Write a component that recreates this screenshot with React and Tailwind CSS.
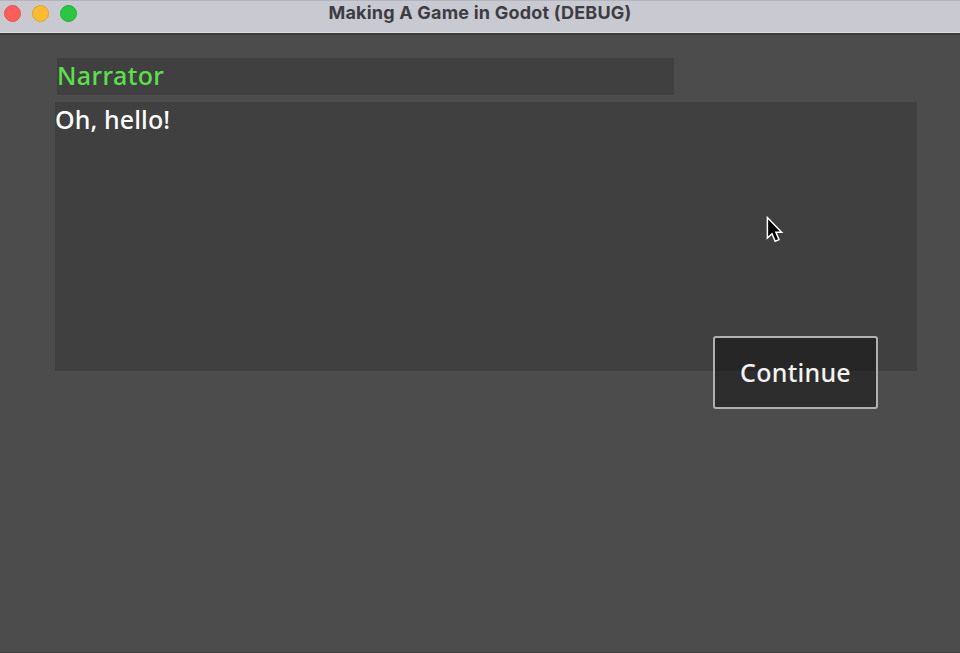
function TitleBar() {
  return (
    <header className="relative flex h-[35px] shrink-0 border-t border-b-2 border-t-[#b4b4be] border-b-[#3d3d3a] bg-[#c9c9d2] shadow-[inset_0_-1px_0_#dcdce2]">
      <div className="flex gap-[11px] pt-[4px] pl-[4px]">
        <span className="size-[17px] rounded-full border border-[#e2564f] bg-[#ff5d57]" />
        <span className="size-[17px] rounded-full border border-[#dfa431] bg-[#febb2e]" />
        <span className="size-[17px] rounded-full border border-[#27ae38] bg-[#28c840]" />
      </div>
      <h1 className="absolute inset-x-0 top-0 text-center font-['Inter',sans-serif] text-[18px] leading-[24px] font-bold whitespace-nowrap text-[#3d3d42]">
        <span className="inline-block tracking-[0.2px]">Making A Game in Godot (DEBUG)</span>
      </h1>
    </header>
  );
}

function Cursor() {
  return (
    <svg className="absolute top-[215px] left-[765px] h-[29px] w-[20px]" viewBox="0 0 20 29">
      <path
        d="M2.4 2.5V23L7 18.7L10.2 26.2L14 24.6L10.9 17.2H16.6Z"
        fill="#000"
        stroke="#fff"
        strokeWidth="1.5"
      />
    </svg>
  );
}

export default function App() {
  return (
    <div className="relative flex h-[653px] w-[960px] flex-col overflow-hidden border-b border-[#3c3c3c] bg-[#4c4c4c] font-['Noto_Sans',sans-serif] text-[25px] font-medium text-white">
      <TitleBar />
      <main className="flex flex-col pt-[23px] pl-[55px]">
        <div className="ml-[2px] h-[37px] w-[617px] bg-[#404040] leading-[34px] text-[#5be04b]">
          <span className="inline-block tracking-[0.4px]">Narrator</span>
        </div>
        <div className="mt-[7px] h-[269px] w-[862px] bg-[#404040] leading-[34px]">
          <span className="inline-block tracking-[0.1px]">Oh, hello!</span>
        </div>
      </main>
      <button className="absolute top-[336px] left-[713px] flex h-[73px] w-[165px] items-center justify-center rounded-[3px] border-2 border-[#b0b0b0] bg-black/40 text-[#f2f2f2]">
        <span className="tracking-[0.25px]">Continue</span>
      </button>
      <Cursor />
    </div>
  );
}
